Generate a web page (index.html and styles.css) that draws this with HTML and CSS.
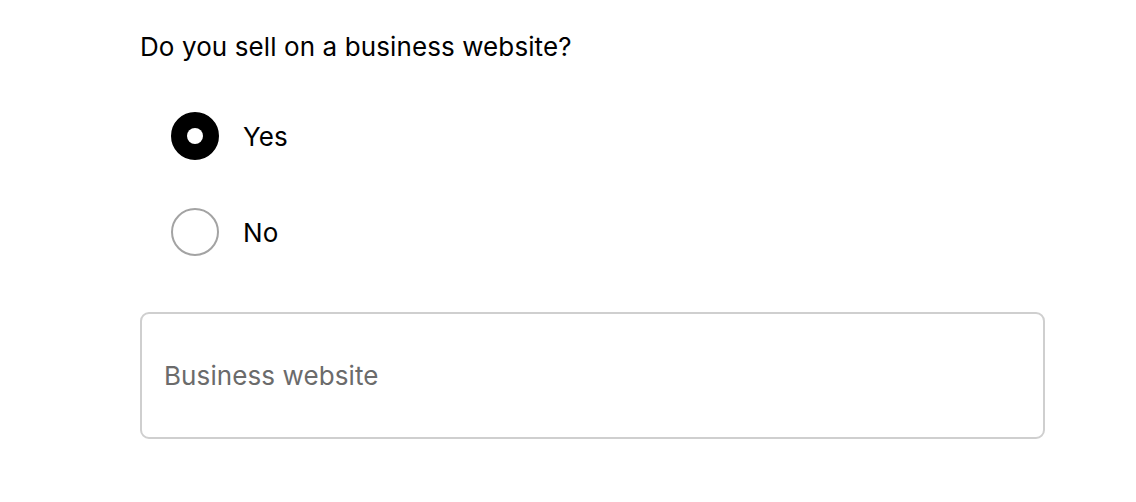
FILE: index.html
```html
<!DOCTYPE html>
<html>
<head>
<meta charset="utf-8">
<link rel="stylesheet" href="styles.css">
</head>
<body>
<form class="form">
  <p class="question">Do you sell on a business website?</p>
  <div class="options">
    <label class="option">
      <span class="radio radio-checked"><span class="dot"></span></span>
      <span class="option-label">Yes</span>
    </label>
    <label class="option">
      <span class="radio"></span>
      <span class="option-label">No</span>
    </label>
  </div>
  <div class="field">
    <input class="input" type="text" placeholder="Business website">
  </div>
</form>
</body>
</html>
```
FILE: styles.css
```css
html, body {
  margin: 0;
  padding: 0;
  background: #ffffff;
}
body {
  font-family: Inter, "Liberation Sans", sans-serif;
  color: #000;
}
.form {
  padding: 30px 0 0 140px;
  width: 904px;
}
.question {
  margin: 0;
  font-size: 26px;
  line-height: 34px;
  letter-spacing: 0.1px;
}
.options {
  display: flex;
  flex-direction: column;
  gap: 48px;
  margin-top: 48px;
  padding-left: 31px;
}
.option {
  display: flex;
  align-items: center;
  gap: 24px;
  height: 48px;
}
.radio {
  box-sizing: border-box;
  width: 48px;
  height: 48px;
  border-radius: 50%;
  border: 2px solid #a3a3a3;
  display: flex;
  align-items: center;
  justify-content: center;
}
.radio-checked {
  background: #000;
  border-color: #000;
}
.dot {
  width: 16px;
  height: 16px;
  border-radius: 50%;
  background: #fff;
}
.option-label {
  font-size: 26px;
  letter-spacing: 0.1px;
}
.field {
  margin-top: 56px;
}
.input {
  box-sizing: border-box;
  width: 905px;
  height: 127px;
  border: 2px solid #cfcfcf;
  border-radius: 9px;
  padding: 0 22px;
  font-family: Inter, "Liberation Sans", sans-serif;
  font-size: 26px;
  letter-spacing: 0.1px;
  color: #000;
  outline: none;
  background: #fff;
}
.input::placeholder {
  color: #6b6b6b;
}
```
